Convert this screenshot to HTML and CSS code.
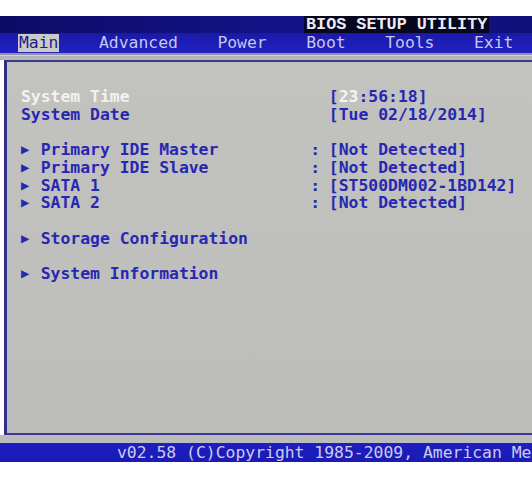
FILE: index.html
```html
<!DOCTYPE html>
<html lang="en">
<head>
  <meta charset="UTF-8" />
  <title>BIOS Setup Utility</title>
  <link rel="stylesheet" href="styles.css">
</head>
<body>

  <div class="screen">
    <!-- TITLE BAR -->
    <div class="titlebar">
      <span class="title">BIOS SETUP UTILITY</span>
    </div>

    <!-- MENU TABS -->
    <div class="tabs">
      <span class="tab active">Main</span>
      <span class="tab">Advanced</span>
      <span class="tab">Power</span>
      <span class="tab">Boot</span>
      <span class="tab">Tools</span>
      <span class="tab">Exit</span>
    </div>

    <div class="strip"></div>

    <!-- MAIN PAGE -->
    <div class="frame">
      <div class="rows">
        <div class="row">
          <span class="label wide selected">System Time</span>
          <span class="value">[<span class="edit">23</span>:56:18]</span>
        </div>
        <div class="row">
          <span class="label wide">System Date</span>
          <span class="value">[Tue 02/18/2014]</span>
        </div>

        <div class="row group">
          <span class="arrow">&#9654;</span>
          <span class="label">Primary IDE Master</span>
          <span class="colon">:</span>
          <span class="value">[Not Detected]</span>
        </div>
        <div class="row">
          <span class="arrow">&#9654;</span>
          <span class="label">Primary IDE Slave</span>
          <span class="colon">:</span>
          <span class="value">[Not Detected]</span>
        </div>
        <div class="row">
          <span class="arrow">&#9654;</span>
          <span class="label">SATA 1</span>
          <span class="colon">:</span>
          <span class="value">[ST500DM002-1BD142]</span>
        </div>
        <div class="row">
          <span class="arrow">&#9654;</span>
          <span class="label">SATA 2</span>
          <span class="colon">:</span>
          <span class="value">[Not Detected]</span>
        </div>

        <div class="row group">
          <span class="arrow">&#9654;</span>
          <span class="label">Storage Configuration</span>
        </div>

        <div class="row group">
          <span class="arrow">&#9654;</span>
          <span class="label">System Information</span>
        </div>
      </div>
    </div>

    <div class="strip bottom"></div>

    <!-- FOOTER -->
    <div class="footer">v02.58 (C)Copyright 1985-2009, American Megatrends, Inc.</div>
  </div>

</body>
</html>
```

FILE: styles.css
```css
body {
  margin: 0;
  padding: 0;
  background: #fff;
  font-family: "DejaVu Sans Mono", "Liberation Mono", monospace;
  font-size: 16.4px;
  overflow: hidden;
}

.screen {
  margin-top: 16px;
  width: 532px;
  overflow: hidden;
}

/* top bar with the utility name */
.titlebar {
  height: 17px;
  display: flex;
  justify-content: flex-end;
  padding-right: 43px;
  background: linear-gradient(90deg, #0c0c66, #14148c 60%, #10107a);
}

.title {
  background: #06061c;
  color: #ececf2;
  font-family: "Liberation Mono", monospace;
  font-weight: bold;
  font-size: 16.8px;
  line-height: 17px;
  padding: 0 2px;
  width: 181px;
  white-space: nowrap;
}

.tabs {
  height: 20px;
  display: flex;
  align-items: center;
  padding-left: 19px;
  background: linear-gradient(#1a1aa8, #2121c4);
  color: #c6c6ee;
  white-space: nowrap;
}

.tab {
  line-height: 18px;
  margin-right: 4ch;
}

.tab.active {
  background: #cacac8;
  color: #1c1c8c;
  padding: 0 1px;
  margin-left: -1px;
}

.strip {
  height: 7px;
  background: #b6b6b8;
  border-top: 2px solid #9494a8;
  box-sizing: border-box;
  box-shadow: inset 0 1px 0 #d2d2d8;
}

.strip.bottom {
  height: 8px;
  border-top: none;
  box-shadow: none;
  background: #bcbcbc;
}

/* framed page area */
.frame {
  height: 375px;
  box-sizing: border-box;
  margin-left: 4px;
  border-left: 3px solid #2f2f8a;
  border-top: 2px solid #3a3a8e;
  border-bottom: 2px solid #3a3a94;
  background: linear-gradient(#c2c2bf, #bdbdbb);
}

.rows {
  padding: 26px 0 0 14px;
}

.row {
  display: grid;
  grid-template-columns: 2ch 27ch 2.2ch auto;
  line-height: 17.7px;
  font-weight: bold;
  color: #2727b2;
  white-space: nowrap;
}

.row.group {
  margin-top: 17.7px;
}

.arrow {
  font-size: 14px;
  font-weight: normal;
}

.colon {
  padding-left: 3px;
}

.label.wide {
  grid-column: 1 / 4;
}

.selected {
  color: #f2f2f2;
}

.value {
  grid-column: 4;
}

.edit {
  color: #f4f4f4;
}

.footer {
  height: 19px;
  line-height: 19px;
  padding-left: 117px;
  background: linear-gradient(#1e1ec4, #1a1ab4);
  color: #ccccea;
  white-space: nowrap;
  overflow: hidden;
}
```
